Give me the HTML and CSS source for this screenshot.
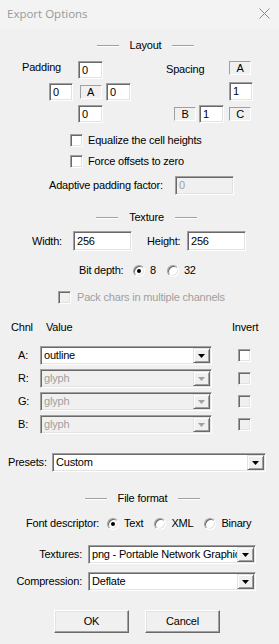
FILE: index.html
```html
<!DOCTYPE html>
<html lang="en">
<head>
<meta charset="UTF-8">
<title>Export Options</title>
<link rel="stylesheet" href="styles.css">
</head>
<body>
<div class="dlg">
  <div class="titlebar">
    <span class="title">Export Options</span>
    <svg class="close" width="11" height="11" viewBox="0 0 11 11"><path d="M0.5 0.5L10.5 10.5M10.5 0.5L0.5 10.5" stroke="#8c8c8c" stroke-width="1" fill="none"/></svg>
  </div>

  <!-- Layout -->
  <div class="sect sect-layout"><span class="etch"></span><span>Layout</span><span class="etch"></span></div>
  <div class="spacing-row">
    <div class="pad-grid">
      <span class="pad-lbl">Padding</span>
      <span class="edit pt">0</span>
      <span class="edit pl">0</span>
      <span class="stat pa">A</span>
      <span class="edit pr">0</span>
      <span class="edit pb">0</span>
    </div>
    <div class="sp-grid">
      <span class="sp-lbl">Spacing</span>
      <span class="stat sa">A</span>
      <span class="edit se">1</span>
      <span class="stat sb">B</span>
      <span class="edit sbe">1</span>
      <span class="stat sc">C</span>
    </div>
  </div>
  <div class="chk-row chk-eq"><span class="cb"></span><span>Equalize the cell heights</span></div>
  <div class="chk-row chk-fo"><span class="cb"></span><span>Force offsets to zero</span></div>
  <div class="adapt-row">
    <span class="adapt-lbl">Adaptive padding factor:</span>
    <span class="edit dis adapt-box">0</span>
  </div>

  <!-- Texture -->
  <div class="sect sect-tex"><span class="etch"></span><span>Texture</span><span class="etch"></span></div>
  <div class="size-row">
    <span class="w-lbl">Width:</span>
    <span class="edit size-box">256</span>
    <span class="h-lbl">Height:</span>
    <span class="edit size-box">256</span>
  </div>
  <div class="radio-row bit-row">
    <span class="bit-lbl">Bit depth:</span>
    <span class="opt"><span class="rb on"></span>8</span>
    <span class="opt"><span class="rb"></span>32</span>
  </div>
  <div class="chk-row chk-pack dis-text"><span class="cb dis"></span><span>Pack chars in multiple channels</span></div>

  <div class="chnl-head"><span>Chnl</span><span>Value</span><span>Invert</span></div>
  <div class="chnl-grid">
    <span>A:</span>
    <div class="combo"><span class="val">outline</span><span class="drop"><svg width="7" height="4" viewBox="0 0 7 4"><path d="M0 0H7L3.5 4Z"/></svg></span></div>
    <span class="cb"></span>
    <span>R:</span>
    <div class="combo dis"><span class="val">glyph</span><span class="drop"><svg width="7" height="4" viewBox="0 0 7 4"><path d="M0 0H7L3.5 4Z"/></svg></span></div>
    <span class="cb dis"></span>
    <span>G:</span>
    <div class="combo dis"><span class="val">glyph</span><span class="drop"><svg width="7" height="4" viewBox="0 0 7 4"><path d="M0 0H7L3.5 4Z"/></svg></span></div>
    <span class="cb dis"></span>
    <span>B:</span>
    <div class="combo dis"><span class="val">glyph</span><span class="drop"><svg width="7" height="4" viewBox="0 0 7 4"><path d="M0 0H7L3.5 4Z"/></svg></span></div>
    <span class="cb dis"></span>
  </div>

  <div class="preset-row">
    <span class="preset-lbl">Presets:</span>
    <div class="combo preset-combo"><span class="val">Custom</span><span class="drop"><svg width="7" height="4" viewBox="0 0 7 4"><path d="M0 0H7L3.5 4Z"/></svg></span></div>
  </div>

  <!-- File format -->
  <div class="sect sect-ff"><span class="etch"></span><span>File format</span><span class="etch"></span></div>
  <div class="radio-row fd-row">
    <span class="fd-lbl">Font descriptor:</span>
    <span class="opt"><span class="rb on"></span>Text</span>
    <span class="opt"><span class="rb"></span>XML</span>
    <span class="opt"><span class="rb"></span>Binary</span>
  </div>
  <div class="fmt-grid">
    <span class="fmt-lbl">Textures:</span>
    <div class="combo"><span class="val">png - Portable Network Graphics</span><span class="drop"><svg width="7" height="4" viewBox="0 0 7 4"><path d="M0 0H7L3.5 4Z"/></svg></span></div>
    <span class="fmt-lbl">Compression:</span>
    <div class="combo"><span class="val">Deflate</span><span class="drop"><svg width="7" height="4" viewBox="0 0 7 4"><path d="M0 0H7L3.5 4Z"/></svg></span></div>
  </div>

  <div class="btn-row">
    <button class="btn">OK</button>
    <button class="btn">Cancel</button>
  </div>
</div>
</body>
</html>
```

FILE: styles.css
```css
:root {
  --face: #f0f0f0;
  --light: #e3e3e3;
  --shadow: #a0a0a0;
  --dark: #696969;
  --hi: #ffffff;
  --dis: #a0a0a0;
}
*{box-sizing:border-box;}
html,body{margin:0;}
body{background:var(--face);font-family:"Liberation Sans",Arial,sans-serif;font-size:11px;line-height:13px;letter-spacing:-0.2px;color:#000;width:279px;height:644px;overflow:hidden;}

.titlebar{height:29px;background:#f3f3f3;display:flex;align-items:center;justify-content:space-between;padding:0 9px 3px 7px;}
.title{font-family:"Open Sans",sans-serif;font-size:11.5px;letter-spacing:0;color:#999;}

/* etched section headers */
.sect{display:flex;align-items:center;justify-content:center;gap:11px;height:13px;padding-left:12px;}
.etch{width:22px;height:2px;border-top:1px solid var(--shadow);border-bottom:1px solid var(--hi);}
.sect-layout{margin-top:10px;}
.sect-tex{margin-top:16px;padding-left:14px;}
.sect-ff{margin-top:20px;padding-left:6px;}

/* controls */
.edit{display:flex;align-items:center;background:#fff;padding-left:3px;border:1px solid;border-color:var(--shadow) var(--hi) var(--hi) var(--shadow);box-shadow:inset 1px 1px 0 var(--dark),inset -1px -1px 0 var(--light);white-space:nowrap;overflow:hidden;}
.edit.dis{background:var(--face);color:var(--dis);}
.stat{display:flex;align-items:center;justify-content:center;height:14px;width:22px;border:1px solid;border-color:var(--shadow) var(--hi) var(--hi) var(--shadow);}
.cb{display:inline-block;width:13px;height:13px;background:#fff;border:1px solid;border-color:var(--shadow) var(--hi) var(--hi) var(--shadow);box-shadow:inset 1px 1px 0 var(--dark),inset -1px -1px 0 var(--light);}
.cb.dis{background:var(--face);}
.rb{position:relative;display:inline-block;width:12px;height:12px;border-radius:50%;background:#fff;border:1px solid;border-color:var(--shadow) var(--hi) var(--hi) var(--shadow);box-shadow:inset 1px 1px 0 var(--dark),inset -1px -1px 0 var(--light);}
.rb.on::after{content:"";position:absolute;left:3px;top:3px;width:4px;height:4px;border-radius:50%;background:#000;}
.combo{display:flex;align-items:stretch;height:19px;background:#fff;padding:1px 1px 1px 3px;border:1px solid;border-color:var(--shadow) var(--hi) var(--hi) var(--shadow);box-shadow:inset 1px 1px 0 var(--dark),inset -1px -1px 0 var(--light);}
.combo .val{flex:1;display:flex;align-items:center;white-space:nowrap;overflow:hidden;}
.combo .drop{flex:none;width:17px;display:flex;align-items:center;justify-content:center;background:var(--face);border:1px solid;border-color:var(--light) var(--dark) var(--dark) var(--light);box-shadow:inset 1px 1px 0 var(--hi),inset -1px -1px 0 var(--shadow);}
.combo .drop svg{fill:#000;}
.combo.dis{background:var(--face);}
.combo.dis .val{color:var(--dis);}
.combo.dis .drop svg{fill:var(--dis);}
.btn{width:75px;height:23px;padding:0;font:inherit;letter-spacing:inherit;color:#000;background:var(--face);border:1px solid;border-color:var(--hi) var(--dark) var(--dark) var(--hi);box-shadow:inset -1px -1px 0 var(--shadow),inset 1px 1px 0 var(--light);}

/* layout: padding / spacing */
.spacing-row{display:flex;gap:35px;margin-top:9px;padding-left:22px;}
.pad-grid{display:grid;grid-template-columns:27px 24px 5px 25px 3px 25px;grid-template-rows:18px 18px 18px;row-gap:4px;}
.pad-lbl{grid-column:1/4;grid-row:1;align-self:start;}
.pt{grid-column:4;grid-row:1;}
.pl{grid-column:2;grid-row:2;}
.pa{grid-column:4;grid-row:2;align-self:center;justify-self:center;}
.pr{grid-column:6;grid-row:2;}
.pb{grid-column:4;grid-row:3;}
.sp-grid{display:grid;grid-template-columns:8px 22px 3px 25px 5px 24px;grid-template-rows:18px 18px 18px;row-gap:4px;}
.sp-lbl{grid-column:1/5;grid-row:1;margin-top:2px;}
.sa{grid-column:6;grid-row:1;align-self:start;}
.se{grid-column:6;grid-row:2;margin-top:-1px;}
.sb{grid-column:2;grid-row:3;align-self:center;}
.sbe{grid-column:4;grid-row:3;}
.sc{grid-column:6;grid-row:3;align-self:center;}

.chk-row{display:flex;align-items:center;gap:5px;height:13px;}
.chk-eq{margin-top:11px;padding-left:70px;}
.chk-fo{margin-top:8px;padding-left:70px;}
.chk-pack{margin-top:14px;padding-left:58px;gap:6px;}
.dis-text{color:var(--dis);}

.adapt-row{display:flex;align-items:center;margin-top:8px;padding-left:49px;}
.adapt-lbl{width:126px;}
.adapt-box{width:59px;height:19px;}

/* texture */
.size-row{display:flex;align-items:center;margin-top:7px;padding-left:32px;}
.w-lbl{width:41px;}
.h-lbl{width:40px;margin-left:15px;}
.size-box{width:59px;height:20px;}
.radio-row{display:flex;align-items:center;height:13px;}
.opt{display:flex;align-items:center;gap:5px;margin-right:11px;}
.bit-row{margin-top:13px;padding-left:79px;}
.bit-lbl{width:54px;}

.chnl-head{display:grid;grid-template-columns:35px 186px auto;margin-top:17px;padding-left:11px;}
.chnl-grid{display:grid;grid-template-columns:22px 198px 13px;grid-auto-rows:19px;row-gap:4px;align-items:center;margin-top:12px;padding-left:18px;}
.chnl-grid .combo{width:172px;}

.preset-row{display:flex;align-items:center;margin-top:19px;padding-left:8px;}
.preset-lbl{width:44px;}
.preset-combo{width:214px;}

.fd-row{margin-top:12px;padding-left:26px;}
.fd-lbl{width:81px;}
.fmt-grid{display:grid;grid-template-columns:82px 168px;column-gap:6px;grid-auto-rows:19px;row-gap:8px;align-items:center;margin-top:15px;}
.fmt-lbl{text-align:right;}

.btn-row{display:flex;gap:16px;margin-top:19px;padding-left:54px;}
```
